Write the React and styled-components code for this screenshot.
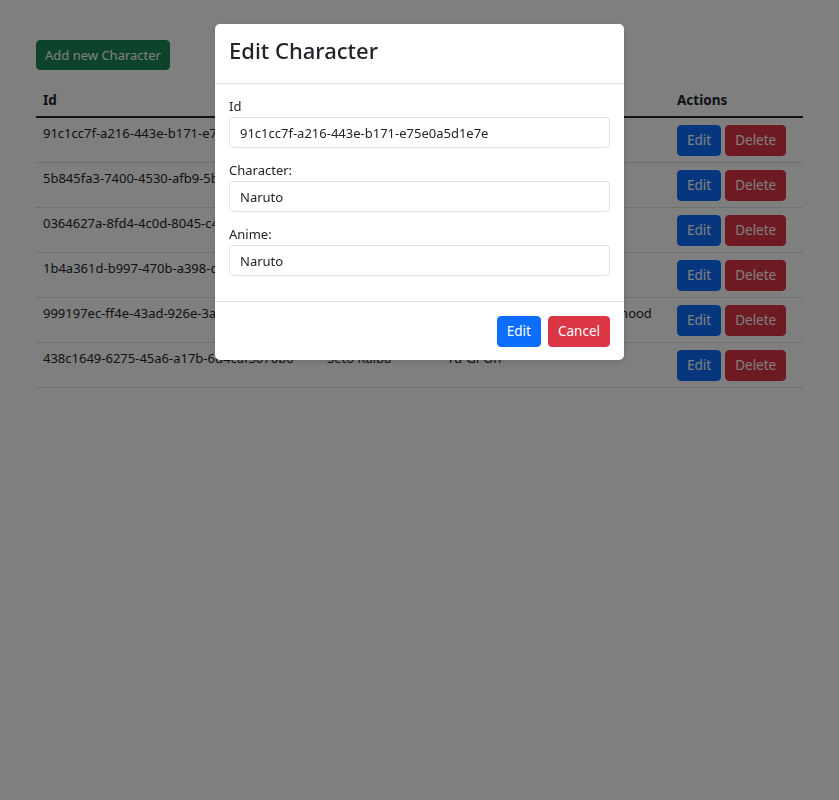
import React from 'react';
import styled, { createGlobalStyle } from 'styled-components';

const GlobalStyle = createGlobalStyle`
  body {
    margin: 0;
    background: #ffffff;
    color: #212529;
    font-family: "Noto Sans", "Open Sans", sans-serif;
    font-size: 13px;
  }
  * { box-sizing: border-box; }
`;

const Page = styled.div`
  padding: 40px 36px;
`;

const Button = styled.button`
  font-family: inherit;
  font-size: 13.5px;
  line-height: 21px;
  padding: 4px 9px;
  border-radius: 4px;
  border: 1px solid ${(p) => p.$bg};
  background: ${(p) => p.$bg};
  color: #ffffff;
  cursor: pointer;
`;

const AddButton = styled(Button)`
  font-size: 13px;
  line-height: 20px;
  padding: 4px 8px;
`;

const Table = styled.table`
  width: 100%;
  margin-top: 12px;
  border-collapse: collapse;
  table-layout: fixed;
`;

const Th = styled.th`
  text-align: left;
  font-weight: 700;
  font-size: 13.5px;
  padding: 8px 7px 6px;
  line-height: 20px;
  border-bottom: 2px solid #212529;
`;

const Td = styled.td`
  padding: 7px 7px 6px;
  vertical-align: top;
  border-bottom: 1px solid #dee2e6;
  white-space: nowrap;
`;

const CellText = styled.div`
  line-height: 16px;
`;

const Actions = styled.div`
  display: flex;
  gap: 4px;
`;

const Backdrop = styled.div`
  position: fixed;
  inset: 0;
  background: rgba(0, 0, 0, 0.5);
  display: flex;
  justify-content: center;
  align-items: flex-start;
  padding-top: 24px;
`;

const Dialog = styled.div`
  width: 409px;
  background: #ffffff;
  border-radius: 5px;
  box-shadow: 0 2px 6px rgba(0, 0, 0, 0.15);
  display: flex;
  flex-direction: column;
`;

const DialogHeader = styled.div`
  padding: 11px 14px 18px;
  border-bottom: 1px solid #dee2e6;
`;

const Title = styled.h3`
  margin: 0;
  font-size: 22px;
  line-height: 30px;
  font-weight: 500;
`;

const DialogBody = styled.div`
  padding: 13px 14px 12px;
`;

const Field = styled.div`
  margin-bottom: 13px;
`;

const Label = styled.label`
  display: block;
  line-height: 18px;
  margin-bottom: 2px;
`;

const Input = styled.input`
  display: block;
  width: 100%;
  height: 31px;
  padding: 0 10px;
  font-family: inherit;
  font-size: 13px;
  color: #212529;
  border: 1px solid #dee2e6;
  border-radius: 4px;
`;

const DialogFooter = styled.div`
  padding: 14px 14px 13px;
  border-top: 1px solid #dee2e6;
  display: flex;
  justify-content: flex-end;
  gap: 7px;
`;

const rows = [
  ['91c1cc7f-a216-443e-b171-e75e0a5d1e7e', 'Naruto', 'Naruto'],
  ['5b845fa3-7400-4530-afb9-5b2e71c0d4a8', 'Goku', 'Dragon Ball'],
  ['0364627a-8fd4-4c0d-8045-c41f9a2b7e63', 'Luffy', 'One Piece'],
  ['1b4a361d-b997-470b-a398-d5c08e4f21b9', 'Ichigo', 'Bleach'],
  ['999197ec-ff4e-43ad-926e-3a7b2d90c5e1', 'Edward Elric', 'Fullmetal Alchemist: Brotherhood'],
  ['438c1649-6275-45a6-a17b-6d4caf3076b0', 'Seto Kaiba', 'Yu-Gi-Oh'],
];

export default function App() {
  return (
    <>
      <GlobalStyle />
      <Page>
        <AddButton $bg="#198754">Add new Character</AddButton>
        <Table>
          <colgroup>
            <col style={{ width: 284 }} />
            <col style={{ width: 120 }} />
            <col style={{ width: 230 }} />
            <col style={{ width: 133 }} />
          </colgroup>
          <thead>
            <tr>
              <Th>Id</Th>
              <Th>Character</Th>
              <Th>Anime</Th>
              <Th>Actions</Th>
            </tr>
          </thead>
          <tbody>
            {rows.map(([id, name, anime]) => (
              <tr key={id}>
                <Td><CellText>{id}</CellText></Td>
                <Td><CellText>{name}</CellText></Td>
                <Td><CellText>{anime}</CellText></Td>
                <Td>
                  <Actions>
                    <Button $bg="#0d6efd">Edit</Button>
                    <Button $bg="#dc3545">Delete</Button>
                  </Actions>
                </Td>
              </tr>
            ))}
          </tbody>
        </Table>
      </Page>
      <Backdrop>
        <Dialog>
          <DialogHeader>
            <Title>Edit Character</Title>
          </DialogHeader>
          <DialogBody>
            <Field>
              <Label>Id</Label>
              <Input defaultValue="91c1cc7f-a216-443e-b171-e75e0a5d1e7e" />
            </Field>
            <Field>
              <Label>Character:</Label>
              <Input defaultValue="Naruto" />
            </Field>
            <Field>
              <Label>Anime:</Label>
              <Input defaultValue="Naruto" />
            </Field>
          </DialogBody>
          <DialogFooter>
            <Button $bg="#0d6efd">Edit</Button>
            <Button $bg="#dc3545">Cancel</Button>
          </DialogFooter>
        </Dialog>
      </Backdrop>
    </>
  );
}
